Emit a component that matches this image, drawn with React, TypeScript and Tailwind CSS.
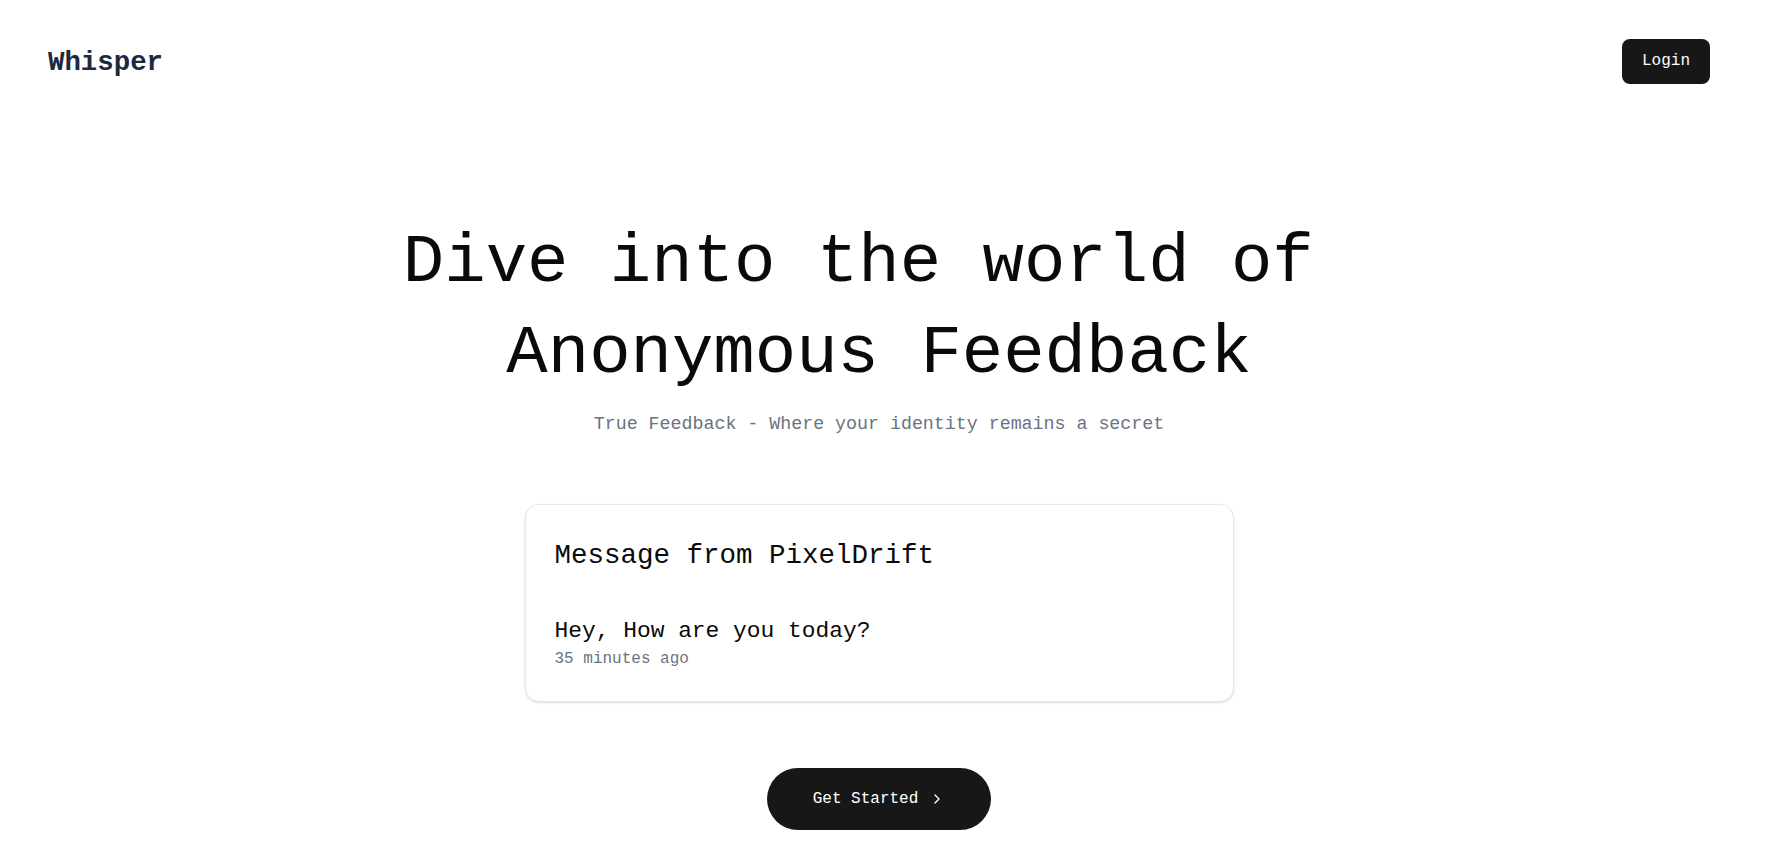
import { ChevronRight } from "lucide-react";

function App() {
  return (
    <div className="min-h-screen bg-white pr-[11px] font-['Liberation_Mono','DejaVu_Sans_Mono',monospace] text-[#0a0a0a]">
      {/* navbar */}
      <nav className="h-[122px] flex items-center justify-between px-12">
        <a className="mt-[3px] text-[27.4px] font-bold text-slate-800">Whisper</a>
        <button className="h-[45px] w-[88px] rounded-lg bg-[#171717] text-white text-[16px]">
          Login
        </button>
      </nav>

      <main className="flex flex-col items-center">
        <section className="mt-[96px] text-center">
          <h1 className="text-[69px] leading-[91px] font-normal">
            {"Dive into the world of\u00a0"}
            <br />
            Anonymous Feedback
          </h1>
          <p className="mt-[10px] text-[18.3px] leading-[28px] text-gray-500">
            True Feedback - Where your identity remains a secret
          </p>
        </section>

        <div className="mt-[66px] w-[709px] rounded-[14px] border border-gray-200 bg-white shadow-sm px-[29px] pt-[33px] pb-[30px]">
          <h3 className="text-[27.5px] leading-[36px]">Message from PixelDrift</h3>
          <p className="mt-[41px] text-[22.9px] leading-[32px]">Hey, How are you today?</p>
          <p className="text-[16px] leading-[24px] text-gray-500">35 minutes ago</p>
        </div>

        <button className="mt-[66px] mb-10 h-[62px] w-[224px] rounded-full bg-[#171717] text-white text-[16px] flex items-center justify-center gap-[11px]">
          Get Started
          <ChevronRight size={16} strokeWidth={2} />
        </button>
      </main>
    </div>
  );
}

export default App;
